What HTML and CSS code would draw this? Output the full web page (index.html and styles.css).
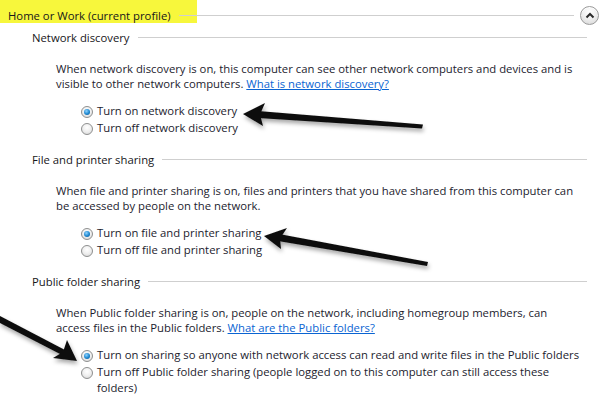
FILE: index.html
```html
<!DOCTYPE html>
<html>
<head>
<meta charset="utf-8">
<link rel="stylesheet" href="styles.css">
</head>
<body>
<div class="page">
  <div class="profile-head">
    <span class="highlight"></span>
    <h1 class="profile-title">Home or Work (current profile)</h1>
    <span class="rule"></span>
    <button class="collapse" aria-label="Collapse">
      <svg width="10" height="7" viewBox="0 0 10 7"><path d="M1.5 5.5 L5 2 L8.5 5.5" fill="none" stroke="#2b2b2b" stroke-width="2"/></svg>
    </button>
  </div>

  <section class="group">
    <div class="group-head"><h2 class="group-title">Network discovery</h2><span class="rule"></span></div>
    <p class="desc">When network discovery is on, this computer can see other network computers and devices and is<br>visible to other network computers. <a href="#">What is network discovery?</a></p>
    <div class="options">
      <label class="opt"><span class="radio on"></span><span>Turn on network discovery</span></label>
      <label class="opt"><span class="radio"></span><span>Turn off network discovery</span></label>
    </div>
  </section>

  <section class="group">
    <div class="group-head"><h2 class="group-title">File and printer sharing</h2><span class="rule"></span></div>
    <p class="desc">When file and printer sharing is on, files and printers that you have shared from this computer can<br>be accessed by people on the network.</p>
    <div class="options">
      <label class="opt"><span class="radio on"></span><span>Turn on file and printer sharing</span></label>
      <label class="opt"><span class="radio"></span><span>Turn off file and printer sharing</span></label>
    </div>
  </section>

  <section class="group">
    <div class="group-head"><h2 class="group-title">Public folder sharing</h2><span class="rule"></span></div>
    <p class="desc">When Public folder sharing is on, people on the network, including homegroup members, can<br>access files in the Public folders. <a href="#">What are the Public folders?</a></p>
    <div class="options">
      <label class="opt"><span class="radio on"></span><span>Turn on sharing so anyone with network access can read and write files in the Public folders</span></label>
      <label class="opt"><span class="radio"></span><span>Turn off Public folder sharing (people logged on to this computer can still access these<br>folders)</span></label>
    </div>
  </section>

  <svg class="arrows" width="600" height="401" viewBox="0 0 600 401">
    <defs>
      <filter id="sh" x="-20%" y="-50%" width="140%" height="200%">
        <feDropShadow dx="1" dy="3" stdDeviation="2" flood-color="#000" flood-opacity="0.35"/>
      </filter>
    </defs>
    <g filter="url(#sh)" fill="#111">
      <polygon points="258,111 423,124.5 422,128.5 258,118"/>
      <polygon points="243,114 265,103 260,114.5 263,126"/>
      <polygon points="279,234 428,262 427,266 278,241"/>
      <polygon points="264,236 287,228 280,238.5 281,249"/>
      <polygon points="0,316 65,350 62,355 0,323"/>
      <polygon points="77,361 53,358 63,352 67,340"/>
    </g>
  </svg>
</div>
</body>
</html>
```

FILE: styles.css
```css
* { box-sizing: border-box; }
html, body {
  margin: 0;
  padding: 0;
  background: #ffffff;
}
body {
  font-family: "Open Sans", "Noto Sans", "Liberation Sans", sans-serif;
  font-size: 11.3px;
  color: #1c1c2e;
}
.page {
  position: relative;
  width: 600px;
  height: 401px;
  overflow: hidden;
  padding: 3px 13px 0 8px;
}
.profile-head {
  position: relative;
  display: flex;
  align-items: center;
  height: 24px;
  margin-bottom: 3px;
}
.highlight {
  position: absolute;
  left: -8px;
  top: -3px;
  width: 197px;
  height: 23px;
  background: #f7f73c;
}
.profile-title {
  position: relative;
  margin: 0;
  font-size: 11.3px;
  font-weight: normal;
  line-height: 15px;
  color: #16161a;
  white-space: nowrap;
}
.rule {
  position: relative;
  flex: 1;
  height: 1px;
  background: #cfcfcf;
  margin-left: 8px;
}
.collapse {
  position: relative;
  width: 19px;
  height: 19px;
  margin: 0 -12px 0 6px;
  padding: 0;
  border-radius: 50%;
  border: 1px solid #9a9a9a;
  background: radial-gradient(circle at 50% 30%, #ffffff 0%, #f0f0f0 45%, #d4d4d4 100%);
  display: flex;
  align-items: center;
  justify-content: center;
  box-shadow: inset 0 1px 0 #fff;
}
.collapse svg { display: block; }
.group {
  padding-left: 24px;
}
.group-head {
  display: flex;
  align-items: center;
  height: 15px;
  margin-top: 1px;
}
.group + .group .group-head { margin-top: 16px; }
.group-title {
  margin: 0;
  font-size: 11.3px;
  font-weight: normal;
  line-height: 15px;
  color: #16161a;
  white-space: nowrap;
}
.desc {
  margin: 16px 0 0 24px;
  line-height: 15px;
  white-space: nowrap;
}
.desc a {
  color: #0a64d2;
  text-decoration: underline;
}
.options {
  margin: 12px 0 0 50px;
  display: flex;
  flex-direction: column;
}
.opt {
  display: flex;
  align-items: flex-start;
  line-height: 17px;
  white-space: nowrap;
}
.opt > span:last-child { line-height: 16.5px; }
.radio {
  flex: none;
  width: 12px;
  height: 12px;
  margin: 3px 4px 0 -1px;
  border-radius: 50%;
  border: 1px solid #8e8f8f;
  background: radial-gradient(circle at 50% 35%, #ffffff 0%, #efefef 50%, #d2d2d2 100%);
  position: relative;
}
.radio.on::after {
  content: "";
  position: absolute;
  left: 2px;
  top: 2px;
  width: 6px;
  height: 6px;
  border-radius: 50%;
  background: radial-gradient(circle at 40% 35%, #8fd3ff 0%, #1b86cf 55%, #0b4f86 100%);
}
.arrows {
  position: absolute;
  left: 0;
  top: 0;
  pointer-events: none;
}
```
